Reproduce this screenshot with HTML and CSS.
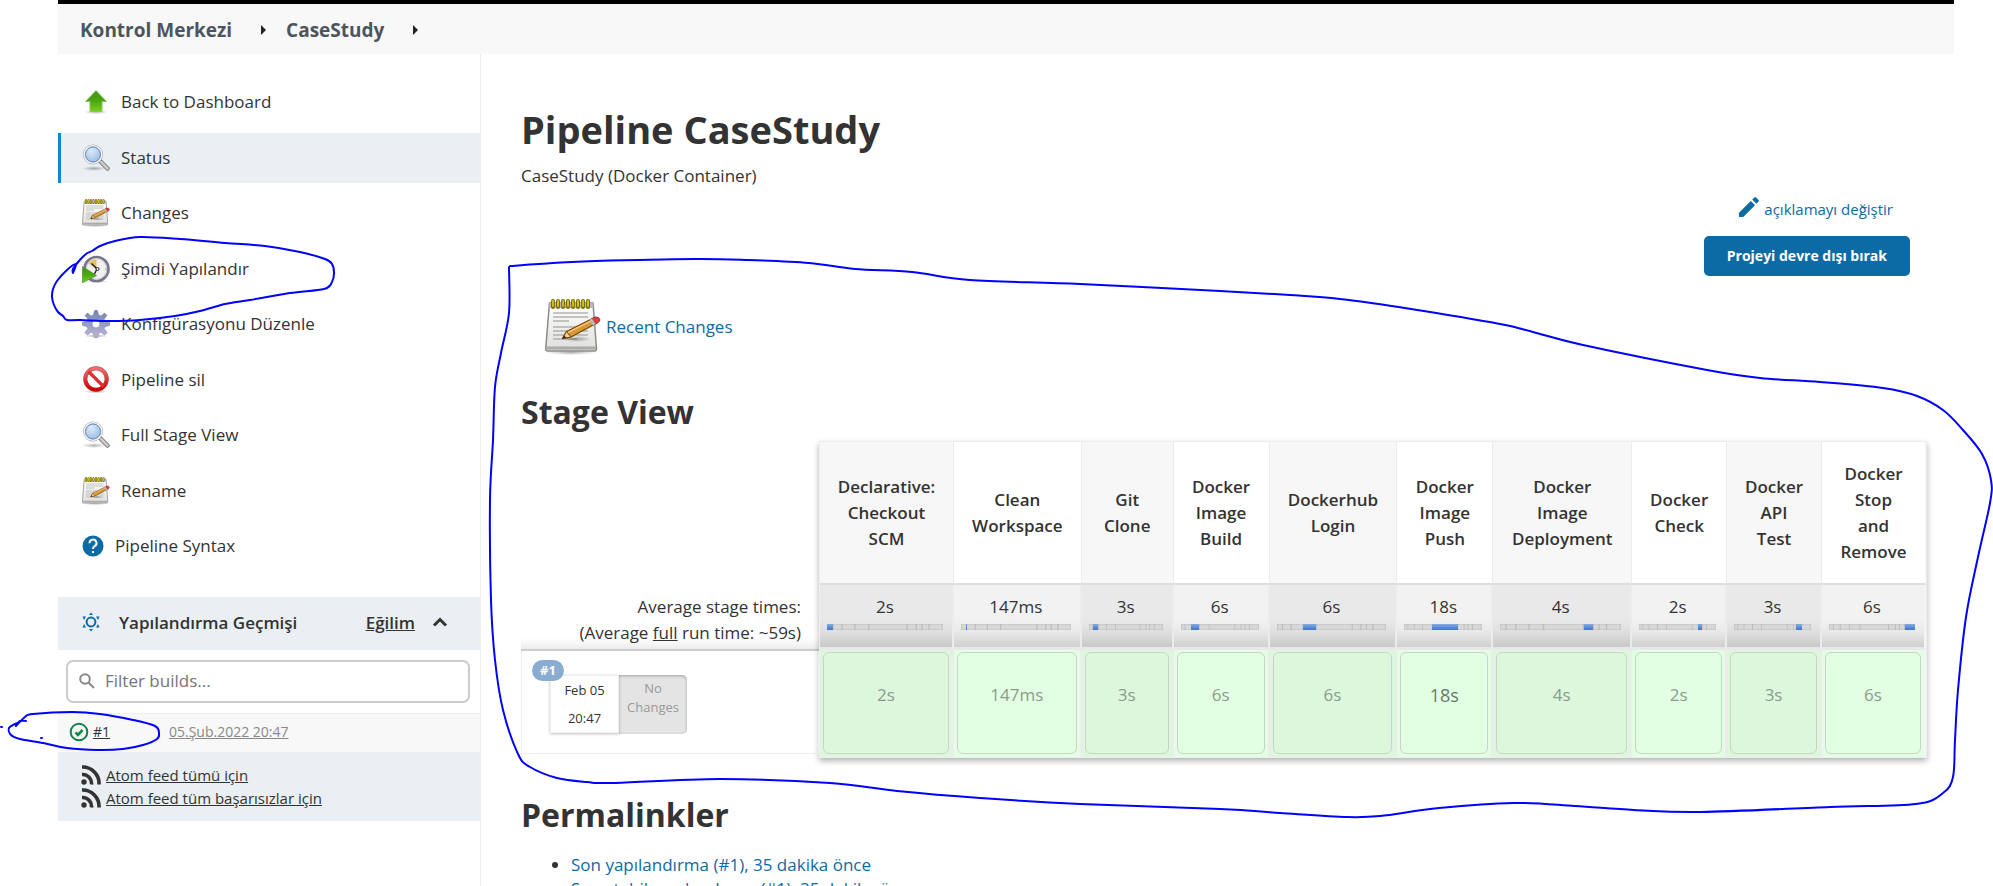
FILE: index.html
```html
<!DOCTYPE html>
<html lang="tr">
<head>
<meta charset="utf-8">
<title>Pipeline CaseStudy</title>
<link rel="stylesheet" href="styles.css">
</head>
<body>
<svg class="sprite" aria-hidden="true">
  <defs>
    <linearGradient id="g-green" x1="0" y1="0" x2="0" y2="1"><stop offset="0" stop-color="#3f8f1c"/><stop offset=".5" stop-color="#4aa80f"/><stop offset="1" stop-color="#73d216"/></linearGradient>
    <linearGradient id="g-paper" x1="0" y1="0" x2="0" y2="1"><stop offset="0" stop-color="#ffffff"/><stop offset="1" stop-color="#dededc"/></linearGradient>
    <linearGradient id="g-gear" x1="0" y1="0" x2="0" y2="1"><stop offset="0" stop-color="#6f86ae"/><stop offset="1" stop-color="#c0b4dc"/></linearGradient>
    <linearGradient id="g-red" x1="0" y1="0" x2="0" y2="1"><stop offset="0" stop-color="#ea7272"/><stop offset="1" stop-color="#cc0000"/></linearGradient>
    <radialGradient id="g-lens" cx=".4" cy=".3" r=".8"><stop offset="0" stop-color="#dceafa"/><stop offset="1" stop-color="#8fb4e0"/></radialGradient>
    <radialGradient id="g-shade"><stop offset="0" stop-color="#000" stop-opacity=".3"/><stop offset="1" stop-color="#000" stop-opacity="0"/></radialGradient>
  </defs>
  <symbol id="i-up" viewBox="0 0 28 28">
    <ellipse cx="14" cy="24" rx="12" ry="2" fill="url(#g-shade)"/>
    <path d="M14 2.500 24.500 13.500H20V23.500H8V13.500H3.500Z" fill="url(#g-green)" stroke="#8cc46a" stroke-width="1"/>
  </symbol>
  <symbol id="i-search" viewBox="0 0 28 28">
    <ellipse cx="12" cy="24.500" rx="12" ry="2.500" fill="url(#g-shade)"/>
    <path d="M18 17 25.500 24.500" stroke="#777" stroke-width="4.500" stroke-linecap="round"/>
    <path d="M19 18 25.500 24.500" stroke="#ccc" stroke-width="2.500" stroke-linecap="round"/>
    <circle cx="11" cy="10.500" r="8.700" fill="url(#g-lens)" stroke="#aaa" stroke-width="2.600"/>
    <circle cx="11" cy="10.500" r="8.700" fill="none" stroke="#f2f2f2" stroke-width="1.600"/>
    <circle cx="11" cy="10.500" r="7.500" fill="none" stroke="#6b8fc4" stroke-width="1"/>
  </symbol>
  <symbol id="i-note" viewBox="0 0 56 56">
    <ellipse cx="26" cy="53.500" rx="26" ry="2.500" fill="url(#g-shade)"/>
    <path d="M4.500 4H48L51.500 49.500Q51.500 52 49.500 52H2.500Q.500 52 .700 49.500Z" fill="url(#g-paper)" stroke="#8a8c88" stroke-width="1.500"/>
    <path d="M4.500 4H48L48.300 9H4.100Z" fill="#b8bab6"/>
    <path d="M1.500 47.500H51V50.500H1.500Z" fill="#a9aba8"/>
    <path d="M8 14H43M8 18H43M8 22H24M8 28H43M8 32H43M8 36H43M8 40H32" stroke="#b0b2ae" stroke-width="1.400"/>
    <path d="M8 2V8M13 2V8M18 2V8M23 2V8M28 2V8M33 2V8M38 2V8M43 2V8" stroke="#7d6f08" stroke-width="4" stroke-linecap="round"/>
    <path d="M8 2V7M13 2V7M18 2V7M23 2V7M28 2V7M33 2V7M38 2V7M43 2V7" stroke="#d8c528" stroke-width="1.800" stroke-linecap="round"/>
    <ellipse cx="32" cy="40" rx="14" ry="3" fill="url(#g-shade)"/>
    <path d="M17.500 39.500 21.500 32.500 47.500 19.500 51 24.500 26 38Z" fill="#d79732" stroke="#7a4a08" stroke-width="1.300" stroke-linejoin="round"/>
    <path d="M23 33.500 48 21" stroke="#f0c070" stroke-width="1.500"/>
    <path d="M17.500 39.500 21.500 32.500 26 38Z" fill="#ecd09a" stroke="#7a4a08"/>
    <path d="M17.500 39.500 19.200 36.500 21.200 38.800Z" fill="#222"/>
    <path d="M46 20 50 18Q54.500 17.500 55 21Q54.500 23.500 49.500 25.500Z" fill="#e5393d" stroke="#8a3b3b"/>
    <path d="M44.500 20.700 47 19.500 50.500 25 48 26.300Z" fill="#b9bcc0"/>
  </symbol>
  <symbol id="i-clock" viewBox="0 0 28 28">
    <ellipse cx="15" cy="26.500" rx="12" ry="1.500" fill="url(#g-shade)"/>
    <circle cx="14.500" cy="14" r="12" fill="#efefed" stroke="#77748c" stroke-width="2.600"/>
    <circle cx="14.500" cy="14" r="10.300" fill="none" stroke="#c9c9cf"/>
    <path d="M14.500 14V4.500Q9.500 4.500 6.500 8.500Z" fill="#e2c35e"/>
    <path d="M9.500 8.500 15 14 12.500 19" fill="none" stroke="#222" stroke-width="1.400"/>
    <circle cx="15.500" cy="14" r="1.500" fill="#fff" stroke="#222"/>
    <path d="M23 14H24.500" stroke="#888"/>
    <path d="M.500 11.500V27.800L14.500 20.500Z" fill="url(#g-green)" stroke="#5f8f45" stroke-width=".800"/>
  </symbol>
  <symbol id="i-gear" viewBox="0 0 28 28">
    <ellipse cx="14" cy="26" rx="12" ry="2" fill="url(#g-shade)"/>
    <g fill="url(#g-gear)" stroke="#7f88a8" stroke-width=".700">
      <path fill-rule="evenodd" d="M12.500.500H15.500L16.500 5 19 6 22.500 3 25 5.500 22 9 23 11.500 27.500 12.500V15.500L23 16.500 22 19 25 22.500 22.500 25 19 22 16.500 23 15.500 27.500H12.500L11.500 23 9 22 5.500 25 3 22.500 6 19 5 16.500.500 15.500V12.500L5 11.500 6 9 3 5.500 5.500 3 9 6 11.500 5ZM14 10A4 4 0 1 0 14 18 4 4 0 1 0 14 10Z"/>
    </g>
  </symbol>
  <symbol id="i-ban" viewBox="0 0 28 28">
    <ellipse cx="14" cy="25.500" rx="12" ry="2" fill="url(#g-shade)"/>
    <g fill="none" stroke-linecap="butt">
      <circle cx="14" cy="13" r="10.700" fill="#fff" stroke="#b33" stroke-width="4"/>
      <circle cx="14" cy="13" r="10.700" stroke="url(#g-red)" stroke-width="3.300"/>
      <path d="M6.500 5.500 21.500 20.500" stroke="#dc2f2f" stroke-width="3.200"/>
    </g>
  </symbol>
  <symbol id="i-help" viewBox="0 0 22 22">
    <circle cx="11" cy="11" r="10.500" fill="#0c6ba4"/>
    <path d="M7.500 8.300A3.500 3.500 0 1 1 12.700 11.200Q11 12.200 11 14" fill="none" stroke="#fff" stroke-width="2"/>
    <path d="M10 16H12V18H10Z" fill="#fff"/>
  </symbol>
  <symbol id="i-weather" viewBox="0 0 20 20">
    <circle cx="10" cy="10" r="4.400" fill="none" stroke="#0c6ba4" stroke-width="2"/>
    <path d="M10 .500 12 3H8ZM10 19.500 8 17H12ZM1.500 4.500H5L3 8ZM18.500 4.500 17 8 15 4.500ZM1.500 15.500 3 12 5 15.500ZM18.500 15.500H15L17 12Z" fill="#0c6ba4"/>
  </symbol>
  <symbol id="i-rss" viewBox="0 0 20 20">
    <circle cx="3" cy="17" r="2.700" fill="#333"/>
    <path d="M1 9.500A9 9 0 0 1 10.500 19.500M1 2A16.500 16.500 0 0 1 18 19.500" fill="none" stroke="#333" stroke-width="3.600"/>
  </symbol>
</svg>

<div class="page">
  <nav class="crumbs" aria-label="Breadcrumb">
    <a href="#">Kontrol Merkezi</a>
    <svg class="crumb-arrow" viewBox="0 0 5 10"><path d="M0 0 5 5 0 10Z"/></svg>
    <a href="#">CaseStudy</a>
    <svg class="crumb-arrow" viewBox="0 0 5 10"><path d="M0 0 5 5 0 10Z"/></svg>
  </nav>

  <div class="body">
    <aside class="side">
      <nav class="tasks">
        <a href="#" class="task"><svg class="task-icon"><use href="#i-up"/></svg>Back to Dashboard</a>
        <a href="#" class="task task-active"><svg class="task-icon"><use href="#i-search"/></svg>Status</a>
        <a href="#" class="task"><svg class="task-icon"><use href="#i-note"/></svg>Changes</a>
        <a href="#" class="task"><svg class="task-icon"><use href="#i-clock"/></svg>Şimdi Yapılandır</a>
        <a href="#" class="task"><svg class="task-icon"><use href="#i-gear"/></svg>Konfigürasyonu Düzenle</a>
        <a href="#" class="task"><svg class="task-icon"><use href="#i-ban"/></svg>Pipeline sil</a>
        <a href="#" class="task"><svg class="task-icon"><use href="#i-search"/></svg>Full Stage View</a>
        <a href="#" class="task"><svg class="task-icon"><use href="#i-note"/></svg>Rename</a>
        <a href="#" class="task"><svg class="task-icon task-icon-small"><use href="#i-help"/></svg>Pipeline Syntax</a>
      </nav>

      <section class="history">
        <header class="history-head">
          <svg class="icon-20"><use href="#i-weather"/></svg>
          <h2 class="history-title">Yapılandırma Geçmişi</h2>
          <a href="#" class="trend">Eğilim</a>
          <button type="button" class="collapse" aria-label="Collapse"><svg viewBox="0 0 16 10"><path d="M2 8.500 8 2.500 14 8.500"/></svg></button>
        </header>
        <label class="filter">
          <svg viewBox="0 0 16 16"><circle cx="6" cy="6" r="4.800"/><path d="M9.500 9.500 15 15"/></svg>
          <input type="text" placeholder="Filter builds..." aria-label="Filter builds">
        </label>
        <div class="build">
          <svg class="icon-20" viewBox="0 0 20 20"><circle cx="10" cy="10" r="8.300" fill="none" stroke="#138347" stroke-width="2"/><path d="M6.500 10.500 9 12.800 13.500 8" fill="none" stroke="#138347" stroke-width="2.600"/></svg>
          <a href="#" class="build-no">#1</a>
          <a href="#" class="build-date">05.Şub.2022 20:47</a>
        </div>
        <div class="feeds">
          <a href="#"><svg class="icon-20"><use href="#i-rss"/></svg><span>Atom feed tümü için</span></a>
          <a href="#"><svg class="icon-20"><use href="#i-rss"/></svg><span>Atom feed tüm başarısızlar için</span></a>
        </div>
      </section>
    </aside>

    <main class="main">
      <h1>Pipeline CaseStudy</h1>
      <p class="desc">CaseStudy (Docker Container)</p>
      <div class="actions">
        <a href="#" class="edit"><svg viewBox="0 0 20 20"><path d="M0 15.800V20H4.200L16 8.200 11.800 4ZM19.600 4.600Q20.300 3.800 19.600 3L17 .400Q16.200-.300 15.400.400L13.200 2.600 17.400 6.800Z"/></svg>açıklamayı değiştir</a>
        <button type="button" class="disable">Projeyi devre dışı bırak</button>
      </div>
      <a href="#" class="recent"><svg><use href="#i-note"/></svg>Recent Changes</a>

      <h2>Stage View</h2>
      <div class="stages">
        <div class="runs">
          <p class="averages">Average stage times:<br>(Average <u>full</u> run time: ~59s)</p>
          <div class="run">
            <span class="run-badge">#1</span>
            <div class="run-date"><span>Feb 05</span><span>20:47</span></div>
            <div class="run-changes">No<br>Changes</div>
          </div>
        </div>
        <table class="grid">
          <colgroup><col class="w134"><col class="w128"><col class="w92"><col class="w96"><col class="w128"><col class="w96"><col class="w139"><col class="w95"><col class="w95"><col class="w104"></colgroup>
          <thead>
            <tr>
              <th>Declarative:<br>Checkout<br>SCM</th>
              <th>Clean<br>Workspace</th>
              <th>Git<br>Clone</th>
              <th>Docker<br>Image<br>Build</th>
              <th>Dockerhub<br>Login</th>
              <th>Docker<br>Image<br>Push</th>
              <th>Docker<br>Image<br>Deployment</th>
              <th>Docker<br>Check</th>
              <th>Docker<br>API<br>Test</th>
              <th>Docker<br>Stop<br>and<br>Remove</th>
            </tr>
          </thead>
          <tbody>
            <tr class="avg">
              <td>2s<div class="bar"><i style="left:0%;width:5%"></i></div></td>
              <td>147ms<div class="bar"><i style="left:5%;width:1%"></i></div></td>
              <td>3s<div class="bar"><i style="left:6%;width:7%"></i></div></td>
              <td>6s<div class="bar"><i style="left:13%;width:11%"></i></div></td>
              <td>6s<div class="bar"><i style="left:24%;width:12%"></i></div></td>
              <td>18s<div class="bar"><i style="left:36%;width:33%"></i></div></td>
              <td>4s<div class="bar"><i style="left:69%;width:8%"></i></div></td>
              <td>2s<div class="bar"><i style="left:77%;width:5%"></i></div></td>
              <td>3s<div class="bar"><i style="left:81%;width:7%"></i></div></td>
              <td>6s<div class="bar"><i style="left:88%;width:12%"></i></div></td>
            </tr>
            <tr class="result">
              <td><div class="ok">2s</div></td>
              <td><div class="ok">147ms</div></td>
              <td><div class="ok">3s</div></td>
              <td><div class="ok">6s</div></td>
              <td><div class="ok">6s</div></td>
              <td><div class="ok ok-slow">18s</div></td>
              <td><div class="ok">4s</div></td>
              <td><div class="ok">2s</div></td>
              <td><div class="ok">3s</div></td>
              <td><div class="ok">6s</div></td>
            </tr>
          </tbody>
        </table>
      </div>

      <h2 class="perma-title">Permalinkler</h2>
      <ul class="perma">
        <li><a href="#">Son yapılandırma (#1), 35 dakika önce</a></li>
        <li><a href="#">Son stabil yapılandırma (#1), 35 dakika önce</a></li>
      </ul>
    </main>
  </div>
</div>

<svg class="ink" viewBox="0 0 1993 886" aria-hidden="true">
  <polyline points="73,273 76,264 67,270 57,281 53,289 52,297 54,305 58,312 63,316 67,320 80,320 110,321 140,320 175,316 200,311 225,304 250,300 290,293 324,289 332,282 334,273 332,264 325,259 300,252 265,246 225,243 180,239 140,237 115,241 100,246 92,251 86,254 79,261 73,269 73,273"/>
  <polyline points="26,721 20,721 16,726 25,717 33,714 72,712 100,714 133,720 155,726 159,733 157,739 143,745 123,749 97,750 67,748 43,743 20,739 11,735 9,728 17,723"/>
  <polyline points="1,727 2,727"/>
  <polyline points="41,738 42,738"/>
  <polyline points="510,266 553,263 595,261 694,259 748,260 809,263 855,269 912,272 970,280 1080,284 1220,291 1290,295 1340,299 1411,309 1500,324 1533,332 1583,345 1707,370 1760,378 1820,382 1883,388 1917,396 1943,410 1963,430 1982,454 1991,480 1990,503 1978,557 1966,617 1958,690 1955,740 1953,777 1943,793 1916,804 1830,807 1701,812 1634,810 1575,806 1513,803 1439,808 1380,816 1347,817 1280,813 1220,809 1080,804 980,798 897,791 830,783 720,779 613,783 587,782 557,778 530,767 518,754 503,710 495,660 491,600 490,500 493,440 495,387 501,353 509,313 509,267"/>
</svg>
<script src="ink.js"></script>
</body>
</html>
```
FILE: ink.js
```js
// Replace each pen polyline with a smooth curve through the same points.
document.querySelectorAll('.ink polyline').forEach(function (line) {
  var p = Array.from(line.points, function (q) { return [q.x, q.y]; });
  var d = 'M' + p[0];
  for (var i = 0; i < p.length - 1; i++) {
    var a = p[i - 1] || p[i], b = p[i], c = p[i + 1], e = p[i + 2] || c;
    d += 'C' + [b[0] + (c[0] - a[0]) / 6, b[1] + (c[1] - a[1]) / 6,
      c[0] - (e[0] - b[0]) / 6, c[1] - (e[1] - b[1]) / 6, c[0], c[1]];
  }
  var path = document.createElementNS('http://www.w3.org/2000/svg', 'path');
  path.setAttribute('d', d);
  line.replaceWith(path);
});
```
FILE: styles.css
```css
* { box-sizing: border-box; }

body {
  margin: 0;
  height: 100vh;
  overflow: hidden;
  position: relative;
  background: #fff;
  color: #333;
  font: 17px/26px "Open Sans", "Noto Sans", sans-serif;
}

a { color: inherit; text-decoration: none; }
svg { display: block; flex: none; }
h1, h2, p, ul { margin: 0; }

.sprite { position: absolute; width: 0; height: 0; }
.ink {
  position: absolute;
  left: 0;
  top: 0;
  width: 1993px;
  height: 886px;
  pointer-events: none;
  fill: none;
  stroke: #00f;
  stroke-width: 2;
  stroke-linecap: round;
  stroke-linejoin: round;
}

.page { margin: 0 39px 0 58px; }

.crumbs {
  display: flex;
  align-items: center;
  gap: 20px;
  height: 54px;
  padding: 2px 22px 0;
  border-top: 4px solid #000;
  background: #f8f8f8;
  color: #4d545d;
  font-size: 19px;
  font-weight: 700;
}
.crumb-arrow { width: 5px; height: 10px; margin-left: 9px; fill: #222; }

.body { display: flex; }

.side {
  width: 423px;
  flex: none;
  min-height: calc(100vh - 54px);
  border-right: 1px solid #e9eff2;
  padding-top: 23px;
}
.tasks { display: flex; flex-direction: column; gap: 5px; }
.task {
  display: flex;
  align-items: center;
  gap: 11px;
  padding: 12px 21px;
  border-left: 3px solid transparent;
  line-height: 1.560;
  font-weight: 500;
}
.task-active { background: #e9eff2; border-left-color: #0b88d8; }
.task-icon { width: 28px; height: 28px; margin-block: -2px; }
.task-icon-small { width: 22px; height: 22px; }

.history { margin-top: 25px; line-height: 23px; }
.history-head {
  display: flex;
  align-items: center;
  height: 53px;
  padding: 0 32px 2px 23px;
  background: #e9eff2;
  font-size: 17px;
  font-weight: 600;
}
.icon-20 { width: 20px; height: 20px; }
.history-title { margin: 0 auto 0 18px; font-size: inherit; font-weight: inherit; line-height: inherit; }
.trend { text-decoration: underline; }
.collapse { margin-left: 17px; padding: 0; border: 0; background: none; }
.collapse svg { width: 16px; height: 10px; fill: none; stroke: #333; stroke-width: 3; }

.filter {
  display: flex;
  align-items: center;
  gap: 10px;
  height: 43px;
  margin: 10px 10px 10px 8px;
  padding: 0 11px;
  border: 2px solid #ccc;
  border-radius: 7px;
}
.filter svg { width: 16px; height: 16px; fill: none; stroke: #888; stroke-width: 2; }
.filter input {
  flex: 1;
  min-width: 0;
  border: 0;
  padding: 0;
  outline: 0;
  background: none;
  font: 17px/26px "Open Sans", "Noto Sans", sans-serif;
}
.filter input::placeholder { color: #757575; }

.build {
  display: flex;
  align-items: center;
  height: 39px;
  padding: 0 0 2px 11px;
  border-top: 1px solid #e9eff2;
  background: #f8f8f8;
  font-size: 14px;
}
.build a { text-decoration: underline; }
.build-no { width: 76px; margin-left: 4px; }
.build-date { color: #888; }

.feeds { padding: 12px 23px 11px; background: #e9eff2; font-size: 15px; }
.feeds a { display: flex; align-items: center; gap: 5px; }
.feeds span { text-decoration: underline; }

.main { flex: 1; min-width: 0; padding: 47px 27px 0 40px; }
h1 { font-size: 38px; line-height: 56px; }
h2 { font-size: 32px; line-height: 46px; }
.desc { margin-top: 6px; }

.actions {
  display: flex;
  flex-direction: column;
  align-items: flex-end;
  gap: 15px;
  margin: 8px 17px 0 0;
}
.edit {
  display: flex;
  gap: 5px;
  margin-right: 17px;
  color: #0c6ba4;
  font-size: 15px;
  line-height: 24px;
}
.edit svg { width: 20px; height: 20px; fill: #0c6ba4; }
.disable {
  height: 40px;
  padding: 0 23px;
  border: 0;
  border-radius: 5px;
  background: #0c6ba4;
  color: #fff;
  font: 700 14px/20px "Open Sans", "Noto Sans", sans-serif;
}

.recent {
  display: inline-flex;
  align-items: center;
  gap: 5px;
  margin: 23px 0 34px 24px;
  color: #0c6ba4;
  font-weight: 500;
}
.recent svg { width: 56px; height: 56px; }

.stages { display: flex; margin-top: 6px; }
.runs {
  display: flex;
  flex-direction: column;
  justify-content: flex-end;
  width: 298px;
  flex: none;
  padding-bottom: 4px;
}
.averages {
  padding: 0 18px 3px 0;
  border-bottom: 2px solid #ccc;
  background: linear-gradient(#fff 80%, #ececec);
  text-align: right;
}
.run {
  display: flex;
  align-items: flex-start;
  position: relative;
  height: 103px;
  padding: 24px 0 0 28px;
  border: 1px solid #eee;
  border-top: 0;
  font-size: 13px;
}
.run-badge {
  position: absolute;
  left: 10px;
  top: 9px;
  padding: 0 8px;
  border-radius: 11px;
  background: #8aacd1;
  color: #fff;
  font-weight: 700;
  line-height: 21px;
}
.run-date {
  display: flex;
  flex-direction: column;
  justify-content: space-around;
  width: 69px;
  height: 58px;
  border: 1px solid #e9eff2;
  background: #fff;
  box-shadow: 0 1px 3px rgba(0, 0, 0, .25);
  text-align: center;
}
.run-changes {
  width: 68px;
  height: 59px;
  padding-top: 4px;
  border-radius: 0 5px 5px 0;
  background: #e4e4e4;
  box-shadow: inset 0 1px 3px rgba(0, 0, 0, .3);
  color: #999;
  line-height: 19px;
  text-align: center;
}

.grid {
  flex: 1;
  min-width: 0;
  table-layout: fixed;
  border-collapse: separate;
  border-spacing: 0;
  border: 1px solid #e9eff2;
  box-shadow: 0 3px 6px rgba(0, 0, 0, .3);
  text-align: center;
}
.w92 { width: 92px; }
.w95 { width: 95px; }
.w96 { width: 96px; }
.w104 { width: 104px; }
.w128 { width: 128px; }
.w134 { width: 134px; }
.w139 { width: 139px; }
.grid th, .grid td { border-right: 2px solid #ececee; }
.grid th:last-child, .grid td:last-child { border-right-color: #f4f4f4; }
.grid th {
  height: 143px;
  padding: 0 12px;
  border-bottom: 2px solid #ddd;
  border-right-width: 1px;
  font-weight: 600;
}
.grid th:nth-child(odd) { background: #f7f7f7; }
.avg td {
  height: 65px;
  padding: 9px 9px 0 7px;
  border-bottom: 3px solid #e8e8ea;
  background: linear-gradient(#f2f2f2 55%, #e9e9e9 75%, #cfcfcf);
  vertical-align: top;
}
.avg td:nth-child(odd) { background: linear-gradient(#e9e9e9 55%, #dfdfdf 75%, #c9c9c9); }
.bar {
  position: relative;
  height: 6px;
  margin-top: 4px;
  background: linear-gradient(90deg, transparent 4%, #bbb 5%, transparent 6%, transparent 12%, #bbb 13%, transparent 14%, transparent 23%, #bbb 24%, transparent 25%, transparent 35%, #bbb 36%, transparent 37%, transparent 68%, #bbb 69%, transparent 70%, transparent 76%, #bbb 77%, transparent 78%, transparent 81%, #bbb 82%, transparent 83%, transparent 87%, #bbb 88%, transparent 89%) #d8d8d8;
  box-shadow: inset 0 0 2px #aaa;
}
.bar i {
  position: absolute;
  top: 0;
  height: 6px;
  background: linear-gradient(#84acdc, #3f74cc);
}
.result td { padding: 2px 3px 3px; background: #e3ffe3; }
.result td:nth-child(odd) { background: #ddf7dd; }
.ok {
  height: 102px;
  padding-top: 29px;
  border: 1px solid #c8d4c8;
  border-radius: 6px;
  color: #8b9c8b;
}
.ok-slow { color: #6a7a6a; font-size: 18px; }

.perma-title { margin-top: 34px; }
.perma { margin-top: 15px; padding-left: 50px; color: #333; line-height: 24px; }
.perma a { color: #0c6ba4; font-weight: 500; }
```
